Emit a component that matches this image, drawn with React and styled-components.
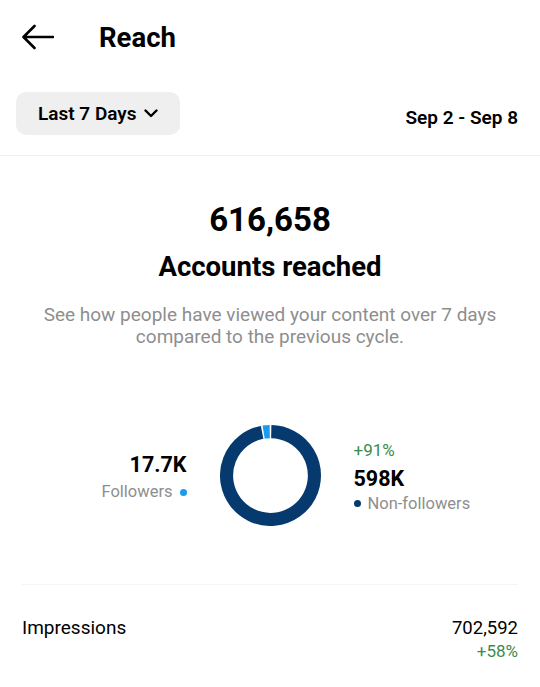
import styled, { createGlobalStyle } from 'styled-components';

const GlobalStyle = createGlobalStyle`
  body {
    margin: 0;
    background: #ffffff;
    font-family: Roboto, "Liberation Sans", sans-serif;
    color: #000000;
  }
`;

const Page = styled.div`
  width: 540px;
  min-height: 687px;
  background: #fff;
`;

const Header = styled.header`
  height: 74px;
  display: flex;
  align-items: center;
  padding: 0 22px;
`;

const BackButton = styled.button`
  border: 0;
  background: none;
  padding: 0;
  display: flex;
  width: 32px;
  height: 26px;
  cursor: pointer;
`;

const Title = styled.h1`
  margin: 0 0 0 45px;
  font-size: 27.5px;
  font-weight: 700;
  letter-spacing: 0;
`;

const FilterRow = styled.div`
  display: flex;
  align-items: center;
  justify-content: space-between;
  padding: 18px 22px 20px 16px;
  border-bottom: 1px solid #efefef;
`;

const RangePill = styled.button`
  height: 43px;
  padding: 0 22px;
  border: 0;
  border-radius: 10px;
  background: #efefef;
  display: flex;
  align-items: center;
  gap: 7px;
  font-family: inherit;
  font-size: 19px;
  font-weight: 600;
  color: #000;
`;

const DateRange = styled.span`
  font-size: 19px;
  font-weight: 600;
  margin-top: 8px;
`;

const Summary = styled.section`
  padding: 46px 38px 0;
  text-align: center;
`;

const BigNumber = styled.div`
  font-size: 33px;
  line-height: 36px;
  font-weight: 700;
`;

const SummaryLabel = styled.div`
  margin-top: 13px;
  font-size: 27.5px;
  line-height: 32px;
  font-weight: 700;
`;

const Description = styled.p`
  margin: 21px 0 0;
  font-size: 19px;
  line-height: 22px;
  color: #8e8e8e;
`;

const ChartRow = styled.div`
  display: grid;
  grid-template-columns: 1fr auto 1fr;
  align-items: center;
  column-gap: 33px;
  margin-top: 77px;
  padding: 0 22px;
`;

const Stat = styled.div`
  display: flex;
  flex-direction: column;
  padding-top: ${(p) => p.$shift || 0}px;
  align-items: ${(p) => (p.$align === 'right' ? 'flex-end' : 'flex-start')};
`;

const Change = styled.span`
  font-size: 17px;
  line-height: 20px;
  color: #3a8c4c;
  margin-bottom: 6px;
`;

const StatValue = styled.span`
  font-size: 21.5px;
  line-height: 25px;
  font-weight: 700;
`;

const Legend = styled.span`
  display: flex;
  align-items: center;
  gap: 7px;
  margin-top: ${(p) => p.$gap || 2}px;
  font-size: 16.5px;
  line-height: 22px;
  color: #8e8e8e;
`;

const Dot = styled.i`
  width: 7px;
  height: 7px;
  border-radius: 50%;
  background: ${(p) => p.$color};
`;

const Separator = styled.hr`
  margin: 58px 22px 0;
  border: 0;
  border-top: 1px solid #f5f5f5;
`;

const MetricRow = styled.div`
  display: flex;
  justify-content: space-between;
  padding: 32px 22px 0;
`;

const MetricName = styled.span`
  font-size: 19px;
  line-height: 22px;
`;

const MetricValues = styled.div`
  display: flex;
  flex-direction: column;
  align-items: flex-end;
`;

const MetricValue = styled.span`
  font-size: 18.5px;
  line-height: 22px;
`;

const MetricChange = styled.span`
  font-size: 17px;
  line-height: 24px;
  color: #3a8c4c;
`;

const NAVY = '#063a6f';
const BLUE = '#1a9bf0';

const polar = (deg, r) => {
  const a = ((deg - 90) * Math.PI) / 180;
  return [50 + r * Math.cos(a), 50 + r * Math.sin(a)];
};

const arc = (from, to, r) => {
  const [x0, y0] = polar(from, r);
  const [x1, y1] = polar(to, r);
  const large = to - from > 180 ? 1 : 0;
  return `M ${x0} ${y0} A ${r} ${r} 0 ${large} 1 ${x1} ${y1}`;
};

const Donut = () => (
  <svg width="101" height="101" viewBox="0 0 100 100">
    <path d={arc(1, 349, 43.5)} fill="none" stroke={NAVY} strokeWidth="13" />
    <path d={arc(351, 359, 43.5)} fill="none" stroke={BLUE} strokeWidth="13" />
  </svg>
);

const App = () => (
  <Page>
    <GlobalStyle />
    <Header>
      <BackButton aria-label="Back">
        <svg width="32" height="26" viewBox="0 0 32 26" fill="none" stroke="#000" strokeWidth="2.6" strokeLinecap="round" strokeLinejoin="round">
          <path d="M31 13H2M12.5 2L1.5 13l11 11" />
        </svg>
      </BackButton>
      <Title>Reach</Title>
    </Header>

    <FilterRow>
      <RangePill>
        Last 7 Days
        <svg width="14" height="9" viewBox="0 0 14 9" fill="none" stroke="#000" strokeWidth="2.4" strokeLinecap="round" strokeLinejoin="round">
          <path d="M1.5 1.5L7 7l5.5-5.5" />
        </svg>
      </RangePill>
      <DateRange>Sep 2 - Sep 8</DateRange>
    </FilterRow>

    <Summary>
      <BigNumber>616,658</BigNumber>
      <SummaryLabel>Accounts reached</SummaryLabel>
      <Description>
        See how people have viewed your content over 7 days compared to the previous cycle.
      </Description>
    </Summary>

    <ChartRow>
      <Stat $align="right" $shift={4}>
        <StatValue>17.7K</StatValue>
        <Legend $gap={4}>
          Followers
          <Dot $color={BLUE} />
        </Legend>
      </Stat>
      <Donut />
      <Stat $shift={3}>
        <Change>+91%</Change>
        <StatValue>598K</StatValue>
        <Legend>
          <Dot $color={NAVY} />
          Non-followers
        </Legend>
      </Stat>
    </ChartRow>

    <Separator />

    <MetricRow>
      <MetricName>Impressions</MetricName>
      <MetricValues>
        <MetricValue>702,592</MetricValue>
        <MetricChange>+58%</MetricChange>
      </MetricValues>
    </MetricRow>
  </Page>
);

export default App;
